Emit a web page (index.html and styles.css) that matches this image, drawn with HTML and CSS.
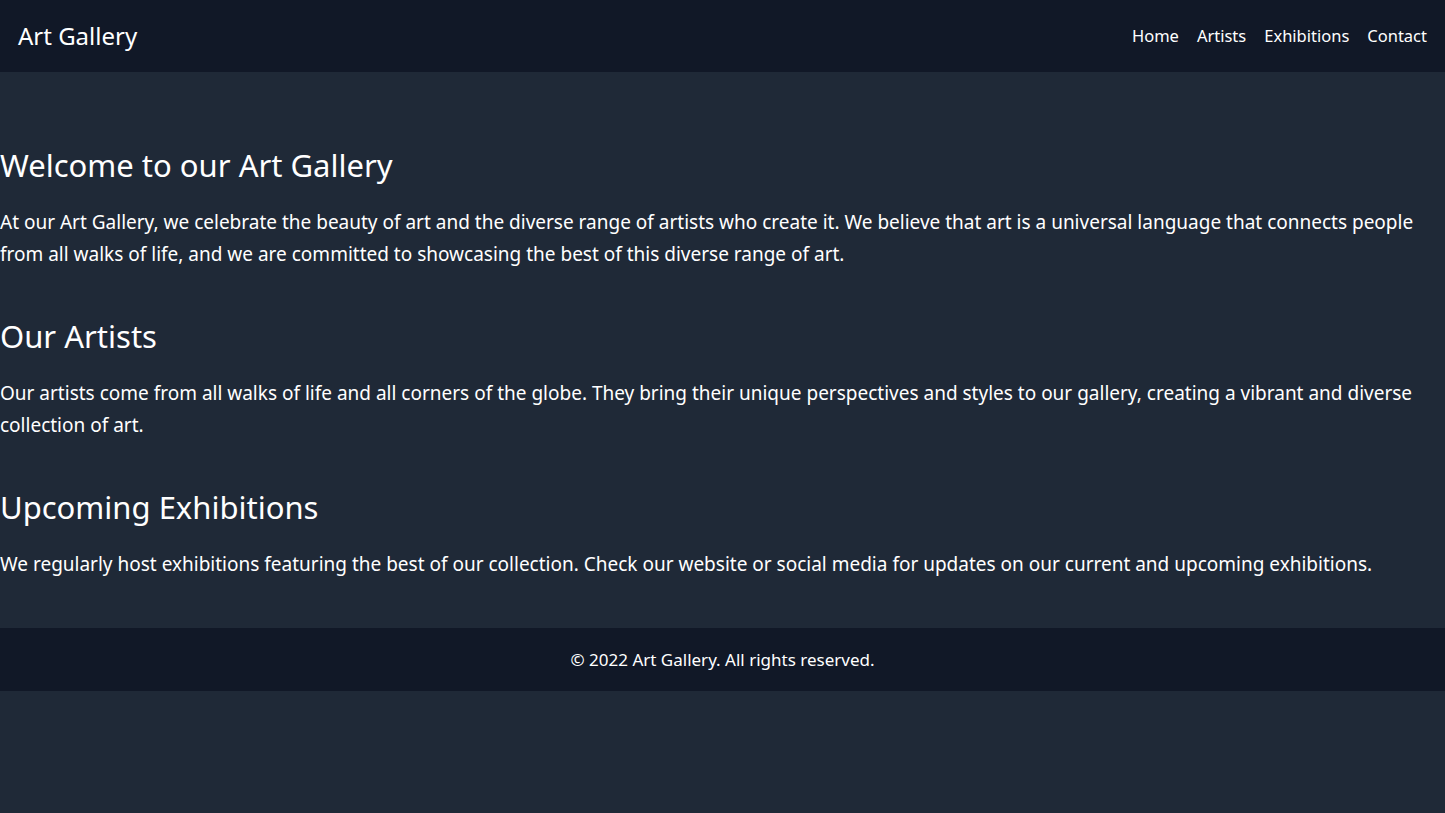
FILE: index.html
```html
<!DOCTYPE html>
<html lang="en">
<head>
<meta charset="utf-8">
<title>Art Gallery</title>
<link rel="stylesheet" href="styles.css">
</head>
<body>
<header class="site-header">
  <div class="brand">Art Gallery</div>
  <nav class="nav">
    <a href="#">Home</a>
    <a href="#">Artists</a>
    <a href="#">Exhibitions</a>
    <a href="#">Contact</a>
  </nav>
</header>
<main class="main">
  <section class="section">
    <h2 class="title">Welcome to our Art Gallery</h2>
    <p class="text">At our Art Gallery, we celebrate the beauty of art and the diverse range of artists who create it. We believe that art is a universal language that connects people from all walks of life, and we are committed to showcasing the best of this diverse range of art.</p>
  </section>
  <section class="section">
    <h2 class="title">Our Artists</h2>
    <p class="text">Our artists come from all walks of life and all corners of the globe. They bring their unique perspectives and styles to our gallery, creating a vibrant and diverse collection of art.</p>
  </section>
  <section class="section">
    <h2 class="title">Upcoming Exhibitions</h2>
    <p class="text">We regularly host exhibitions featuring the best of our collection. Check our website or social media for updates on our current and upcoming exhibitions.</p>
  </section>
</main>
<footer class="site-footer">© 2022 Art Gallery. All rights reserved.</footer>
</body>
</html>
```
FILE: styles.css
```css
html, body {
  margin: 0;
  padding: 0;
}
body {
  background: #1f2937;
  color: #ffffff;
  font-family: "Noto Sans", "Liberation Sans", sans-serif;
  min-height: 813px;
}
.site-header {
  background: #111827;
  height: 72px;
  box-sizing: border-box;
  padding: 0 18px;
  display: flex;
  align-items: center;
  justify-content: space-between;
}
.brand {
  font-size: 24px;
  line-height: 32px;
}
.nav {
  display: flex;
  gap: 18px;
}
.nav a {
  color: #ffffff;
  text-decoration: none;
  font-size: 16.5px;
  line-height: 24px;
}
.main {
  padding: 75px 0 48px;
  display: flex;
  flex-direction: column;
  gap: 48px;
}
.section {
  margin: 0;
}
.title {
  font-size: 31px;
  line-height: 36px;
  font-weight: 400;
  margin: 0 0 23px;
}
.text {
  font-size: 19px;
  line-height: 32px;
  margin: 0;
}
.site-footer {
  background: #111827;
  height: 63px;
  display: flex;
  align-items: center;
  justify-content: center;
  font-size: 17px;
}
```
